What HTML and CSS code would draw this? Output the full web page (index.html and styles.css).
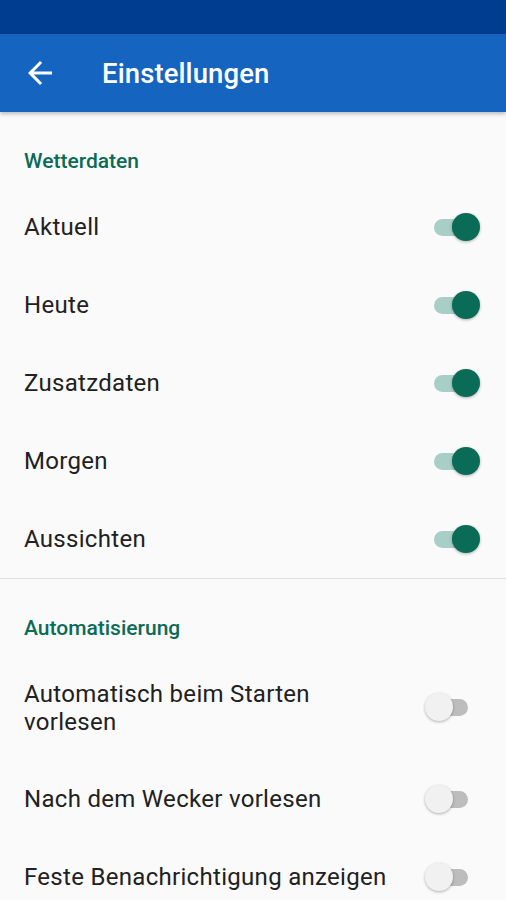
FILE: index.html
```html
<!DOCTYPE html>
<html lang="de">
<head>
<meta charset="UTF-8" />
<meta name="viewport" content="width=device-width, initial-scale=1" />
<title>Einstellungen</title>
<link rel="stylesheet" href="styles.css">
</head>
<body>
  <div class="status-bar"></div>

  <header class="app-bar">
    <button class="back-btn" aria-label="Zurück">
      <svg width="36" height="36" viewBox="0 0 24 24">
        <path d="M20 11H7.83l5.59-5.59L12 4l-8 8 8 8 1.41-1.41L7.83 13H20v-2z" fill="#fff"/>
      </svg>
    </button>
    <h1>Einstellungen</h1>
  </header>

  <main class="settings">
    <section class="group">
      <h2 class="group-title">Wetterdaten</h2>
      <div class="row"><span class="label">Aktuell</span><span class="switch on"></span></div>
      <div class="row"><span class="label">Heute</span><span class="switch on"></span></div>
      <div class="row"><span class="label">Zusatzdaten</span><span class="switch on"></span></div>
      <div class="row"><span class="label">Morgen</span><span class="switch on"></span></div>
      <div class="row"><span class="label">Aussichten</span><span class="switch on"></span></div>
    </section>

    <section class="group">
      <h2 class="group-title">Automatisierung</h2>
      <div class="row two-line"><span class="label">Automatisch beim Starten<br>vorlesen</span><span class="switch off"></span></div>
      <div class="row"><span class="label">Nach dem Wecker vorlesen</span><span class="switch off"></span></div>
      <div class="row"><span class="label">Feste Benachrichtigung anzeigen</span><span class="switch off"></span></div>
    </section>
  </main>
</body>
</html>
```

FILE: styles.css
```css
:root {
  --primary: #1565c0;
  --primary-dark: #003c8f;
  --accent: #0a6b57;
  --text: #212121;
  --bg: #fafafa;
}
* {
  box-sizing: border-box;
}
body {
  margin: 0;
  background: var(--bg);
  font-family: Roboto, "Noto Sans", sans-serif;
  color: var(--text);
  overflow: hidden;
}

.status-bar {
  height: 34px;
  background: var(--primary-dark);
}

.app-bar {
  height: 78px;
  background: var(--primary);
  display: flex;
  align-items: center;
  padding: 0 0 0 22px;
  box-shadow: 0 2px 4px rgba(0,0,0,0.25);
  position: relative;
  z-index: 1;
}
.back-btn {
  background: none;
  border: none;
  padding: 0;
  width: 36px;
  height: 36px;
  display: flex;
  align-items: center;
  justify-content: center;
  margin-right: 44px;
}
.app-bar h1 {
  margin: 0;
  color: #fff;
  font-size: 27.5px;
  font-weight: 500;
  letter-spacing: 0.1px;
}

.group {
  border-bottom: 1px solid #e0e0e0;
}
.group:last-child {
  border-bottom: none;
}
.group-title {
  margin: 0;
  height: 76px;
  padding: 36px 24px 0;
  font-size: 21px;
  line-height: 26px;
  font-weight: 500;
  color: var(--accent);
}

.row {
  height: 78px;
  display: flex;
  align-items: center;
  justify-content: space-between;
  padding: 0 28px 0 24px;
}
.row.two-line {
  height: 105px;
}
.label {
  font-size: 24px;
  line-height: 28px;
  letter-spacing: 0.3px;
}

.switch {
  position: relative;
  width: 44px;
  height: 17px;
  border-radius: 9px;
  flex-shrink: 0;
}
.switch::after {
  content: "";
  position: absolute;
  top: -6px;
  width: 28px;
  height: 28px;
  border-radius: 50%;
  box-shadow: 0 1px 3px rgba(0,0,0,0.3);
}
.switch.on {
  background: #a8cfc7;
}
.switch.on::after {
  right: -2px;
  background: var(--accent);
}
.switch.off {
  width: 38px;
  margin-right: 10px;
  background: #bdbdbd;
}
.switch.off::after {
  left: -5px;
  background: #f1f1f1;
}
```
